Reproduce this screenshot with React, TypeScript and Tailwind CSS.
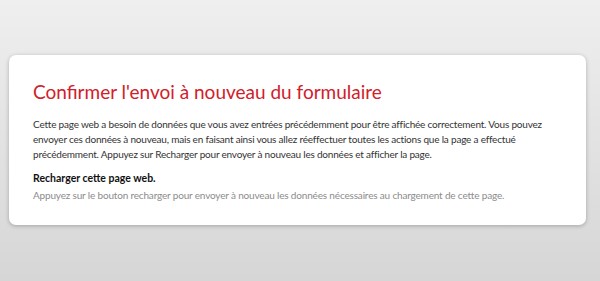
export default function App() {
  return (
    <div
      className="h-[281px] w-[600px] overflow-hidden bg-gradient-to-b from-[#efefef] to-[#d6d6d6] pt-[55px] pl-[9px] pr-[14px]"
      style={{ fontFamily: 'Lato, "Open Sans", sans-serif' }}
    >
      <div className="h-[170px] rounded-[7px] bg-white pl-[24px] pr-[10px] pt-[25px] shadow-[0_1px_4px_rgba(0,0,0,0.25)]">
        <h1 className="whitespace-nowrap text-[19px] leading-[24px] text-[#d0202a]">
          Confirmer l'envoi à nouveau du formulaire
        </h1>
        <p className="mt-[13px] whitespace-nowrap text-[10px] tracking-[-0.2px] leading-[15px] text-[#333333]">
          Cette page web a besoin de données que vous avez entrées précédemment pour être affichée correctement. Vous pouvez
          <br />
          envoyer ces données à nouveau, mais en faisant ainsi vous allez réeffectuer toutes les actions que la page a effectué
          <br />
          précédemment. Appuyez sur Recharger pour envoyer à nouveau les données et afficher la page.
        </p>
        <h2 className="mt-[9px] text-[10.5px] font-bold leading-[15px] text-[#111111]">
          Recharger cette page web.
        </h2>
        <p className="mt-[2px] whitespace-nowrap text-[10px] tracking-[-0.17px] leading-[15px] text-[#8c8c8c]">
          Appuyez sur le bouton recharger pour envoyer à nouveau les données nécessaires au chargement de cette page.
        </p>
      </div>
    </div>
  );
}
